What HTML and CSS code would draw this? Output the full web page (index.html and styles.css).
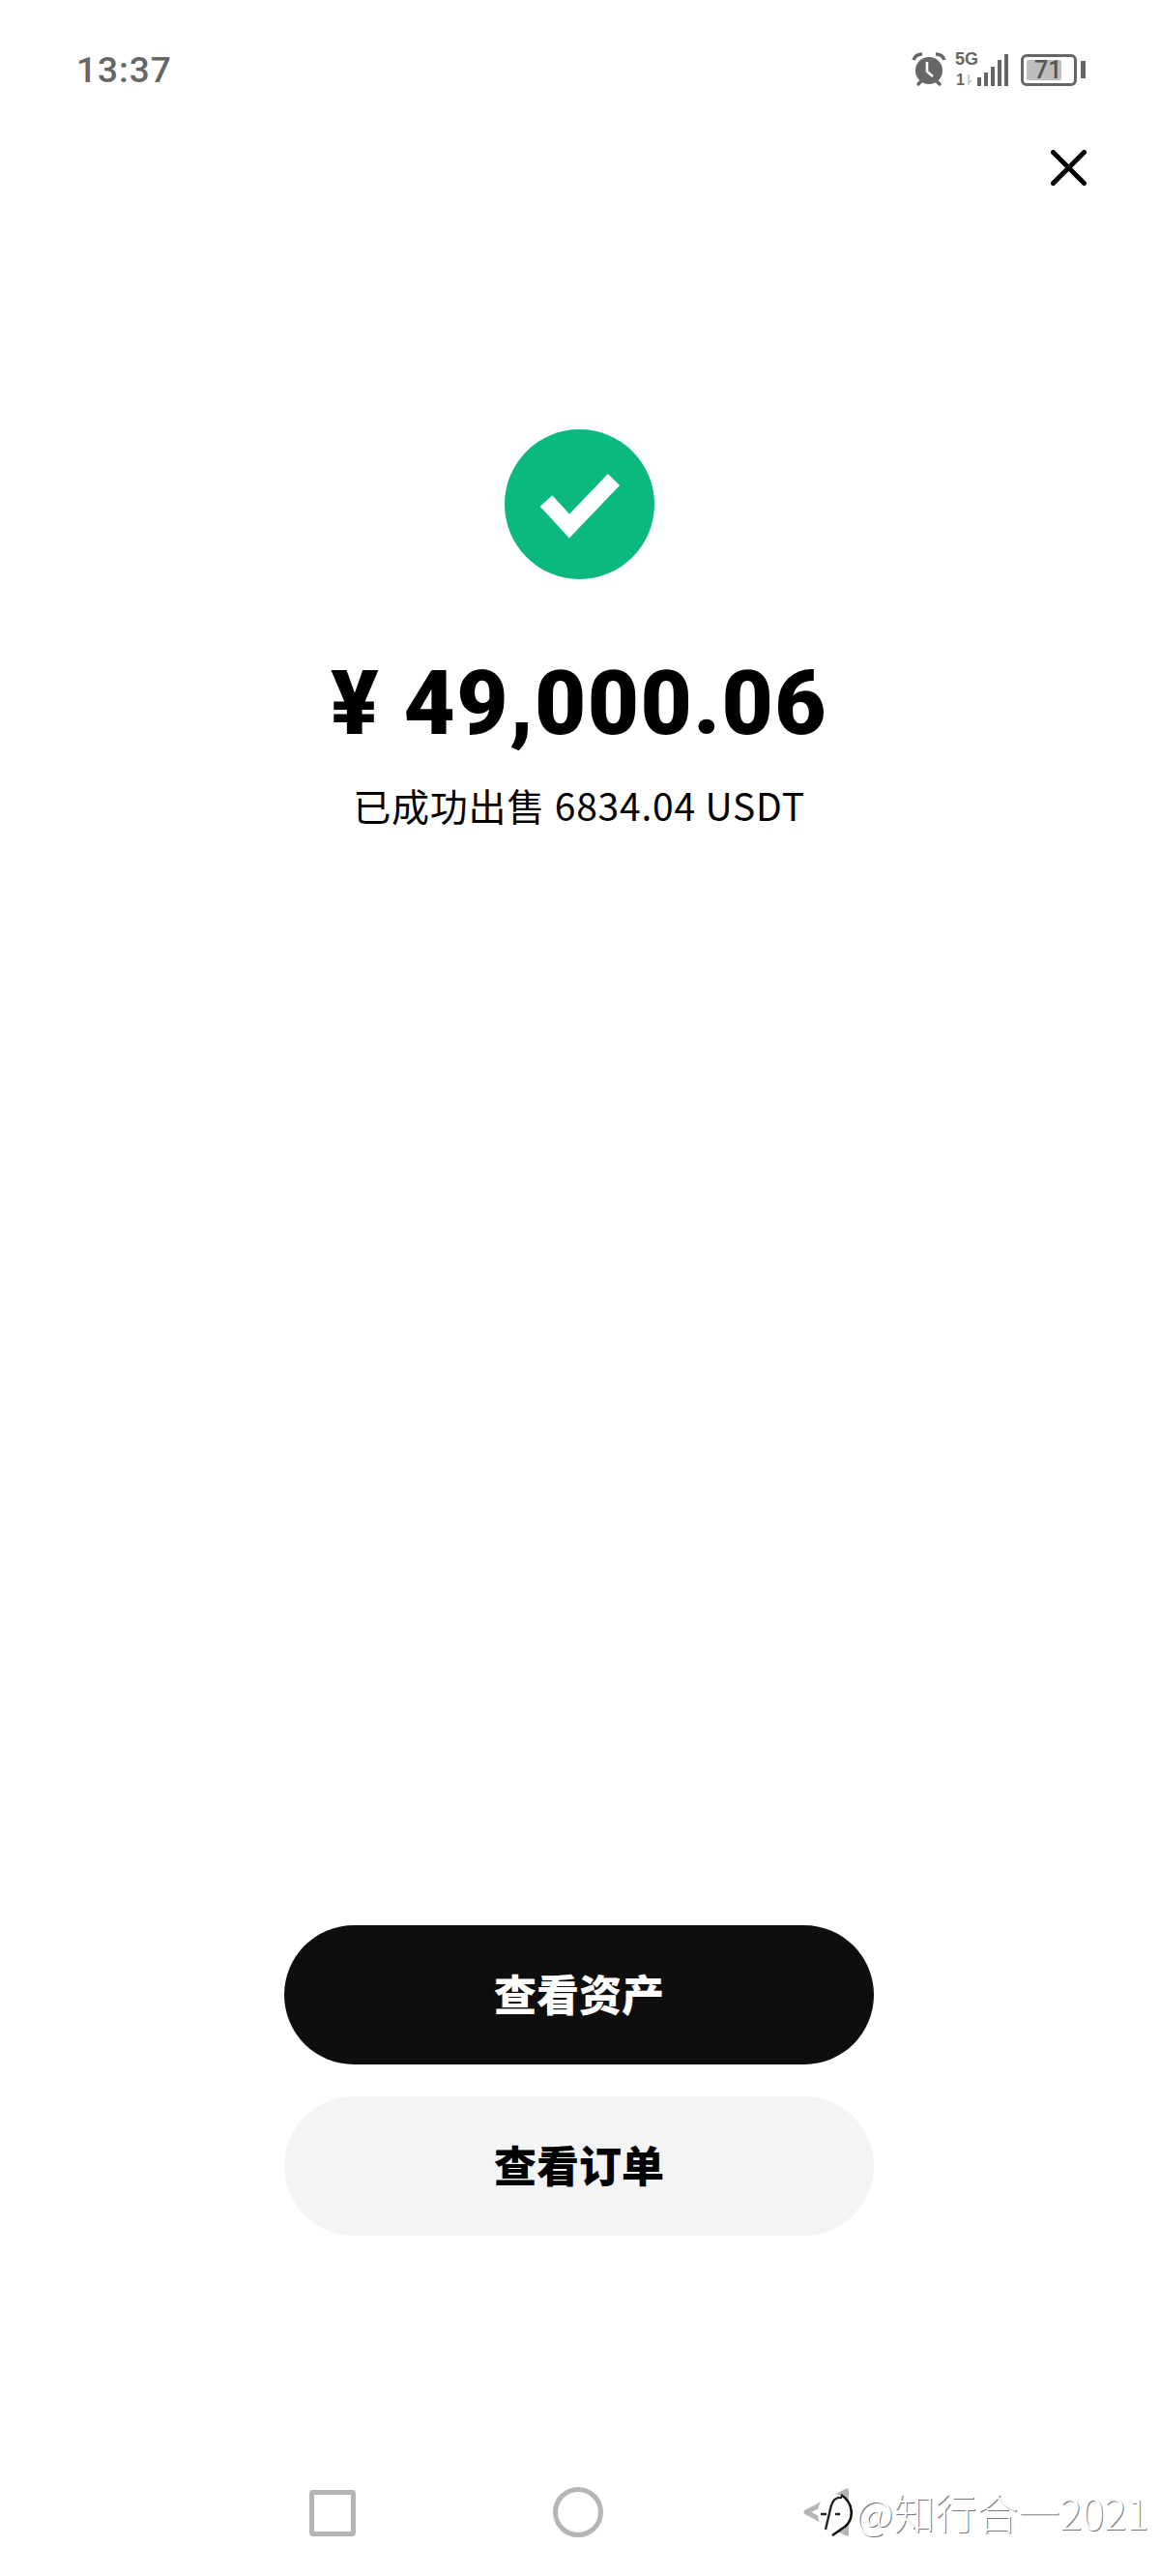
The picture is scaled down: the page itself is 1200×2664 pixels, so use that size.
FILE: index.html
```html
<!DOCTYPE html>
<html>
    <head>
        <title>出售成功</title>
        <meta charset="utf-8"/>
        <link rel="stylesheet" href="styles.css">
    </head>
    <body class="body">
        <header class="status">
            <span class="time">13:37</span>
            <div class="status_icons">
                <svg class="alarm" width="36" height="36" viewBox="0 0 36 36">
                    <circle cx="18" cy="19" r="14" fill="#666"/>
                    <path d="M2 8 Q4 2 11 2 M34 8 Q32 2 25 2" fill="none" stroke="#666" stroke-width="3.4"/>
                    <path d="M7 33l3-3M29 33l-3-3" stroke="#666" stroke-width="3.4" stroke-linecap="round"/>
                    <path d="M16 10v10l6 5" fill="none" stroke="#fff" stroke-width="2.6"/>
                </svg>
                <div class="net">
                    <span class="net_five">5G</span>
                    <span class="net_one">1</span>
                    <svg class="net_arrow" width="8" height="12" viewBox="0 0 8 12"><path d="M3 0v12L8 6H5V0z" fill="#ccc"/></svg>
                </div>
                <div class="bars">
                    <i class="bar bar1"></i>
                    <i class="bar bar2"></i>
                    <i class="bar bar3"></i>
                    <i class="bar bar4"></i>
                    <i class="bar bar5"></i>
                </div>
                <div class="battery">
                    <div class="battery_body">
                        <div class="battery_fill"></div>
                        <span class="battery_num">71</span>
                    </div>
                    <i class="battery_cap"></i>
                </div>
            </div>
        </header>
        <div class="top_bar">
            <svg width="37" height="37" viewBox="0 0 37 37">
                <path d="M2.500 2.500L34.500 34.500M34.500 2.500L2.500 34.500" stroke="#000" stroke-width="5" stroke-linecap="round"/>
            </svg>
        </div>
        <main class="main">
            <svg class="ok" width="155" height="155" viewBox="0 0 155 155">
                <circle cx="77.500" cy="77.500" r="77.500" fill="#0bb97c"/>
                <path d="M43 74L67 100L113 52" fill="none" stroke="#fff" stroke-width="17"/>
            </svg>
            <h1 class="amount">¥ 49,000.06</h1>
            <p class="sub">已成功出售 6834.04 USDT</p>
        </main>
        <section class="btns">
            <a class="btn btn_dark">查看资产</a>
            <a class="btn btn_light">查看订单</a>
        </section>
        <footer class="nav">
            <i class="nav_square"></i>
            <i class="nav_circle"></i>
            <svg class="nav_back" width="48" height="52" viewBox="0 0 48 52">
                <path d="M4 26L46 4V48Z" fill="none" stroke="#b5b5b5" stroke-width="5" stroke-linejoin="round"/>
            </svg>
        </footer>
        <div class="mark">
            <svg class="mark_logo" width="38" height="52" viewBox="0 0 38 52">
                <ellipse cx="17" cy="28" rx="17" ry="20" fill="#fff"/>
                <path d="M24 9C37 17 38 34 28 42L15 51" fill="none" stroke="#111" stroke-width="2.600"/>
                <path d="M25 12C16 11 14 18 12 28L8 45M3 29H9M18 29H23" fill="none" stroke="#222" stroke-width="2.400"/>
            </svg>
            <span class="mark_text">@知行合一2021</span>
        </div>
    </body>
</html>
```

FILE: styles.css
```css
.body{
    margin:0px;
    width:1200px;
    height:2664px;
    background-color:#fff;
    position:relative;
    overflow:hidden;
    display:flex;
    flex-direction:column;
    font-family:"Noto Sans CJK SC",sans-serif;
    color:#000;
}
.status{
    height:56px;
    margin-top:44px;
    padding:0 77px 0 79px;
    display:flex;
    justify-content:space-between;
    align-items:center;
    flex:none;
}
.time{
    font-family:Roboto,sans-serif;
    font-size:37px;
    font-weight:500;
    letter-spacing:1px;
    color:#666;
}
.status_icons{
    display:flex;
    align-items:center;
}
.alarm{
    margin-right:9px;
}
.net{
    width:22px;
    height:34px;
    position:relative;
    margin-right:1px;
}
.net_five{
    position:absolute;
    top:-4px;
    left:0;
    font:bold 18px "Liberation Sans Narrow","Liberation Sans",sans-serif;
    color:#666;
}
.net_one{
    position:absolute;
    bottom:-3px;
    left:1px;
    font:bold 16px "Liberation Sans",sans-serif;
    color:#666;
}
.net_arrow{
    position:absolute;
    bottom:0;
    left:10px;
}
.bars{
    display:flex;
    align-items:flex-end;
    gap:3px;
    height:34px;
    margin-right:13px;
}
.bar{
    display:block;
    width:4px;
    background-color:#666;
}
.bar1{height:9px;}
.bar2{height:14px;}
.bar3{height:20px;}
.bar4{height:27px;}
.bar5{height:33px;}
.battery{
    display:flex;
    align-items:center;
}
.battery_body{
    width:58px;
    height:33px;
    box-sizing:border-box;
    border:3px solid #666;
    border-radius:6px;
    padding:3px;
    position:relative;
}
.battery_fill{
    width:36px;
    height:100%;
    background-color:#bdbdbd;
    border-radius:2px;
}
.battery_num{
    position:absolute;
    top:0;
    left:11px;
    font:500 25px/27px Roboto,sans-serif;
    color:#555;
}
.battery_cap{
    display:block;
    width:5px;
    height:18px;
    margin-left:4px;
    background-color:#666;
}
.top_bar{
    display:flex;
    justify-content:flex-end;
    padding:55px 76px 0 0;
    flex:none;
}
.main{
    display:flex;
    flex-direction:column;
    align-items:center;
    padding:252px 2px 0 0;
    flex:1;
}
.ok{
    display:block;
}
.amount{
    margin:75px 0 0;
    font-family:Roboto,sans-serif;
    font-weight:900;
    font-size:92px;
    line-height:108px;
    letter-spacing:1.400px;
    white-space:pre;
}
.sub{
    margin:22px 0 0;
    font-size:39px;
    line-height:56px;
    font-weight:400;
    letter-spacing:.800px;
}
.btns{
    display:flex;
    flex-direction:column;
    align-items:center;
    gap:33px;
    padding-right:2px;
    flex:none;
}
.btn{
    width:610px;
    height:144px;
    box-sizing:border-box;
    padding-bottom:5px;
    border-radius:72px;
    display:flex;
    align-items:center;
    justify-content:center;
    font-size:44px;
    font-weight:900;
}
.btn_dark{
    background-color:#0e0e0e;
    color:#fff;
}
.btn_light{
    background-color:#f4f4f4;
    color:#000;
}
.nav{
    height:352px;
    box-sizing:border-box;
    padding:260px 0 0 320px;
    display:flex;
    align-items:flex-start;
    flex:none;
}
.nav_square{
    display:block;
    width:48px;
    height:48px;
    box-sizing:border-box;
    border:5px solid #b5b5b5;
    border-radius:4px;
    margin-top:3px;
}
.nav_circle{
    display:block;
    width:52px;
    height:52px;
    box-sizing:border-box;
    border:5px solid #b5b5b5;
    border-radius:50%;
    margin-left:204px;
}
.nav_back{
    margin-left:206px;
}
.mark{
    position:absolute;
    left:846px;
    top:2566px;
    display:flex;
    align-items:center;
    white-space:nowrap;
}
.mark_logo{
    margin-right:1px;
}
.mark_text{
    font-size:43px;
    font-weight:300;
    color:#fff;
    text-shadow:1px 1px 0 #777;
}
```
